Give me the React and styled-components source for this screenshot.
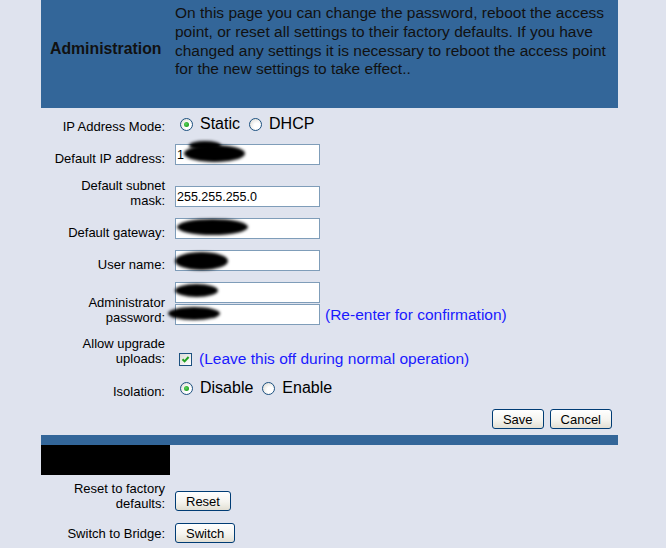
import React from "react";
import styled, { createGlobalStyle } from "styled-components";

const GlobalStyle = createGlobalStyle`
  body {
    margin: 0;
    background: #dfe3ee;
    font-family: "Liberation Sans", Arial, sans-serif;
    color: #000;
  }
`;

const Page = styled.div`
  width: 577px;
  margin-left: 41px;
`;

const Header = styled.div`
  display: flex;
  height: 108px;
  background: #336699;
`;

const HeaderTitle = styled.div`
  width: 125px;
  padding: 0 0 10px 9px;
  display: flex;
  align-items: center;
  font-size: 15.8px;
  font-weight: bold;
  color: #111;
`;

const HeaderText = styled.div`
  width: 440px;
  padding-top: 4px;
  font-size: 15.5px;
  line-height: 18.75px;
  color: #111;
`;

const Row = styled.div`
  display: grid;
  grid-template-columns: 124px 1fr;
  column-gap: 10px;
  align-items: start;
  height: ${(p) => p.$h}px;
`;

const Label = styled.div`
  padding-left: 9px;
  text-align: right;
  font-size: 13px;
  line-height: 15px;
  padding-top: ${(p) => p.$pt}px;
`;

const Control = styled.div`
  display: flex;
  flex-direction: ${(p) => (p.$stack ? "column" : "row")};
  align-items: ${(p) => (p.$stack ? "flex-start" : "center")};
  gap: ${(p) => (p.$stack ? 1 : 4)}px;
  padding-top: ${(p) => p.$pt}px;
  font-size: 16px;
  line-height: 18px;
`;

const Option = styled.label`
  display: inline-flex;
  align-items: center;
`;

const Radio = styled.span`
  box-sizing: border-box;
  width: 13px;
  height: 13px;
  margin: 0 7px 0 5px;
  border: 1px solid #1c5180;
  border-radius: 50%;
  background: radial-gradient(circle at 65% 65%, #ffffff 30%, #d6d4cc 100%);
  display: inline-flex;
  align-items: center;
  justify-content: center;

  &::after {
    content: "";
    width: 5px;
    height: 5px;
    border-radius: 50%;
    background: radial-gradient(circle at 40% 40%, #5ed35e, #21a121 70%);
    display: ${(p) => (p.$checked ? "block" : "none")};
  }
`;

const Check = styled.span`
  box-sizing: border-box;
  width: 13px;
  height: 13px;
  margin: 0 7px 0 4px;
  border: 1px solid #1c5180;
  background: linear-gradient(135deg, #dcdcd7, #ffffff);
  display: inline-flex;
  align-items: center;
  justify-content: center;
`;

const Note = styled.span`
  font-size: 15.5px;
  color: #1a1aff;
`;

const Field = styled.span`
  position: relative;
  display: inline-flex;
  align-items: center;
  gap: 5px;
`;

const Input = styled.input`
  box-sizing: border-box;
  width: 145px;
  height: 21px;
  margin: 0;
  padding: 0 1px;
  border: 1px solid #7f9db9;
  background: #fff;
  font-family: "Liberation Sans", Arial, sans-serif;
  font-size: 12.5px;
  color: #000;
  outline: none;
`;

const Blot = styled.span`
  position: absolute;
  left: ${(p) => p.$x}px;
  top: ${(p) => p.$y}px;
  width: ${(p) => p.$w}px;
  height: ${(p) => p.$h}px;
  border-radius: 50%;
  background: #000;
  filter: blur(1.5px);
`;

const Buttons = styled.div`
  display: flex;
  justify-content: flex-end;
  gap: 6px;
  height: 26px;
  padding: 9px 6px 0 0;
`;

const Button = styled.button`
  height: 20px;
  margin: 0;
  padding: 0 10px;
  border: 1px solid #003c74;
  border-radius: 3px;
  background: linear-gradient(180deg, #ffffff 0%, #f5f4ef 55%, #e2dfd3 100%);
  font-family: "Liberation Sans", Arial, sans-serif;
  font-size: 13px;
  color: #000;
`;

const Bar = styled.div`
  height: 10px;
  background: #336699;
`;

const Redacted = styled.div`
  width: 129px;
  height: 30px;
  background: #000;
`;

function Blots({ items = [] }) {
  return items.map((b, i) => <Blot key={i} $x={b[0]} $y={b[1]} $w={b[2]} $h={b[3]} />);
}

function TextField({ value = "", blots, note }) {
  return (
    <Field>
      <Input readOnly defaultValue={value} />
      <Blots items={blots} />
      {note && <Note>{note}</Note>}
    </Field>
  );
}

function RadioGroup({ options, selected }) {
  return (
    <>
      {options.map((o) => (
        <Option key={o}>
          <Radio $checked={o === selected} />
          {o}
        </Option>
      ))}
    </>
  );
}

export default function App() {
  return (
    <>
      <GlobalStyle />
      <Page>
        <Header>
          <HeaderTitle>Administration</HeaderTitle>
          <HeaderText>
            On this page you can change the password, reboot the access point, or reset all
            settings to their factory defaults. If you have changed any settings it is necessary
            to reboot the access point for the new settings to take effect..
          </HeaderText>
        </Header>

        <Row $h={32}>
          <Label $pt={11}>IP Address Mode:</Label>
          <Control $pt={7}>
            <RadioGroup options={["Static", "DHCP"]} selected="Static" />
          </Control>
        </Row>
        <Row $h={32}>
          <Label $pt={11}>Default IP address:</Label>
          <Control $pt={4}>
            <TextField value="1" blots={[[9, 1, 61, 17], [14, -3, 32, 9]]} />
          </Control>
        </Row>
        <Row $h={40}>
          <Label $pt={6}>Default subnet mask:</Label>
          <Control $pt={14}>
            <TextField value="255.255.255.0" />
          </Control>
        </Row>
        <Row $h={32}>
          <Label $pt={13}>Default gateway:</Label>
          <Control $pt={6}>
            <TextField blots={[[2, 1, 71, 16]]} />
          </Control>
        </Row>
        <Row $h={32}>
          <Label $pt={13}>User name:</Label>
          <Control $pt={6}>
            <TextField blots={[[0, 2, 53, 18]]} />
          </Control>
        </Row>
        <Row $h={54}>
          <Label $pt={19}>Administrator password:</Label>
          <Control $pt={6} $stack>
            <TextField blots={[[0, 2, 43, 13]]} />
            <TextField blots={[[-7, 3, 52, 13]]} note="(Re-enter for confirmation)" />
          </Control>
        </Row>
        <Row $h={46}>
          <Label $pt={6}>Allow upgrade uploads:</Label>
          <Control $pt={20}>
            <Option>
              <Check>
                <svg width="9" height="9" viewBox="0 0 9 9">
                  <path d="M1.5 4.2 L3.6 6.4 L7.6 2" fill="none" stroke="#21a121" strokeWidth="2" />
                </svg>
              </Check>
              <Note>(Leave this off during normal operation)</Note>
            </Option>
          </Control>
        </Row>
        <Row $h={24}>
          <Label $pt={8}>Isolation:</Label>
          <Control $pt={3}>
            <RadioGroup options={["Disable", "Enable"]} selected="Disable" />
          </Control>
        </Row>

        <Buttons>
          <Button>Save</Button>
          <Button>Cancel</Button>
        </Buttons>
        <Bar />
        <Redacted />

        <Row $h={40}>
          <Label $pt={6}>Reset to factory defaults:</Label>
          <Control $pt={16}>
            <Button>Reset</Button>
          </Control>
        </Row>
        <Row $h={33}>
          <Label $pt={11}>Switch to Bridge:</Label>
          <Control $pt={8}>
            <Button>Switch</Button>
          </Control>
        </Row>
      </Page>
    </>
  );
}
